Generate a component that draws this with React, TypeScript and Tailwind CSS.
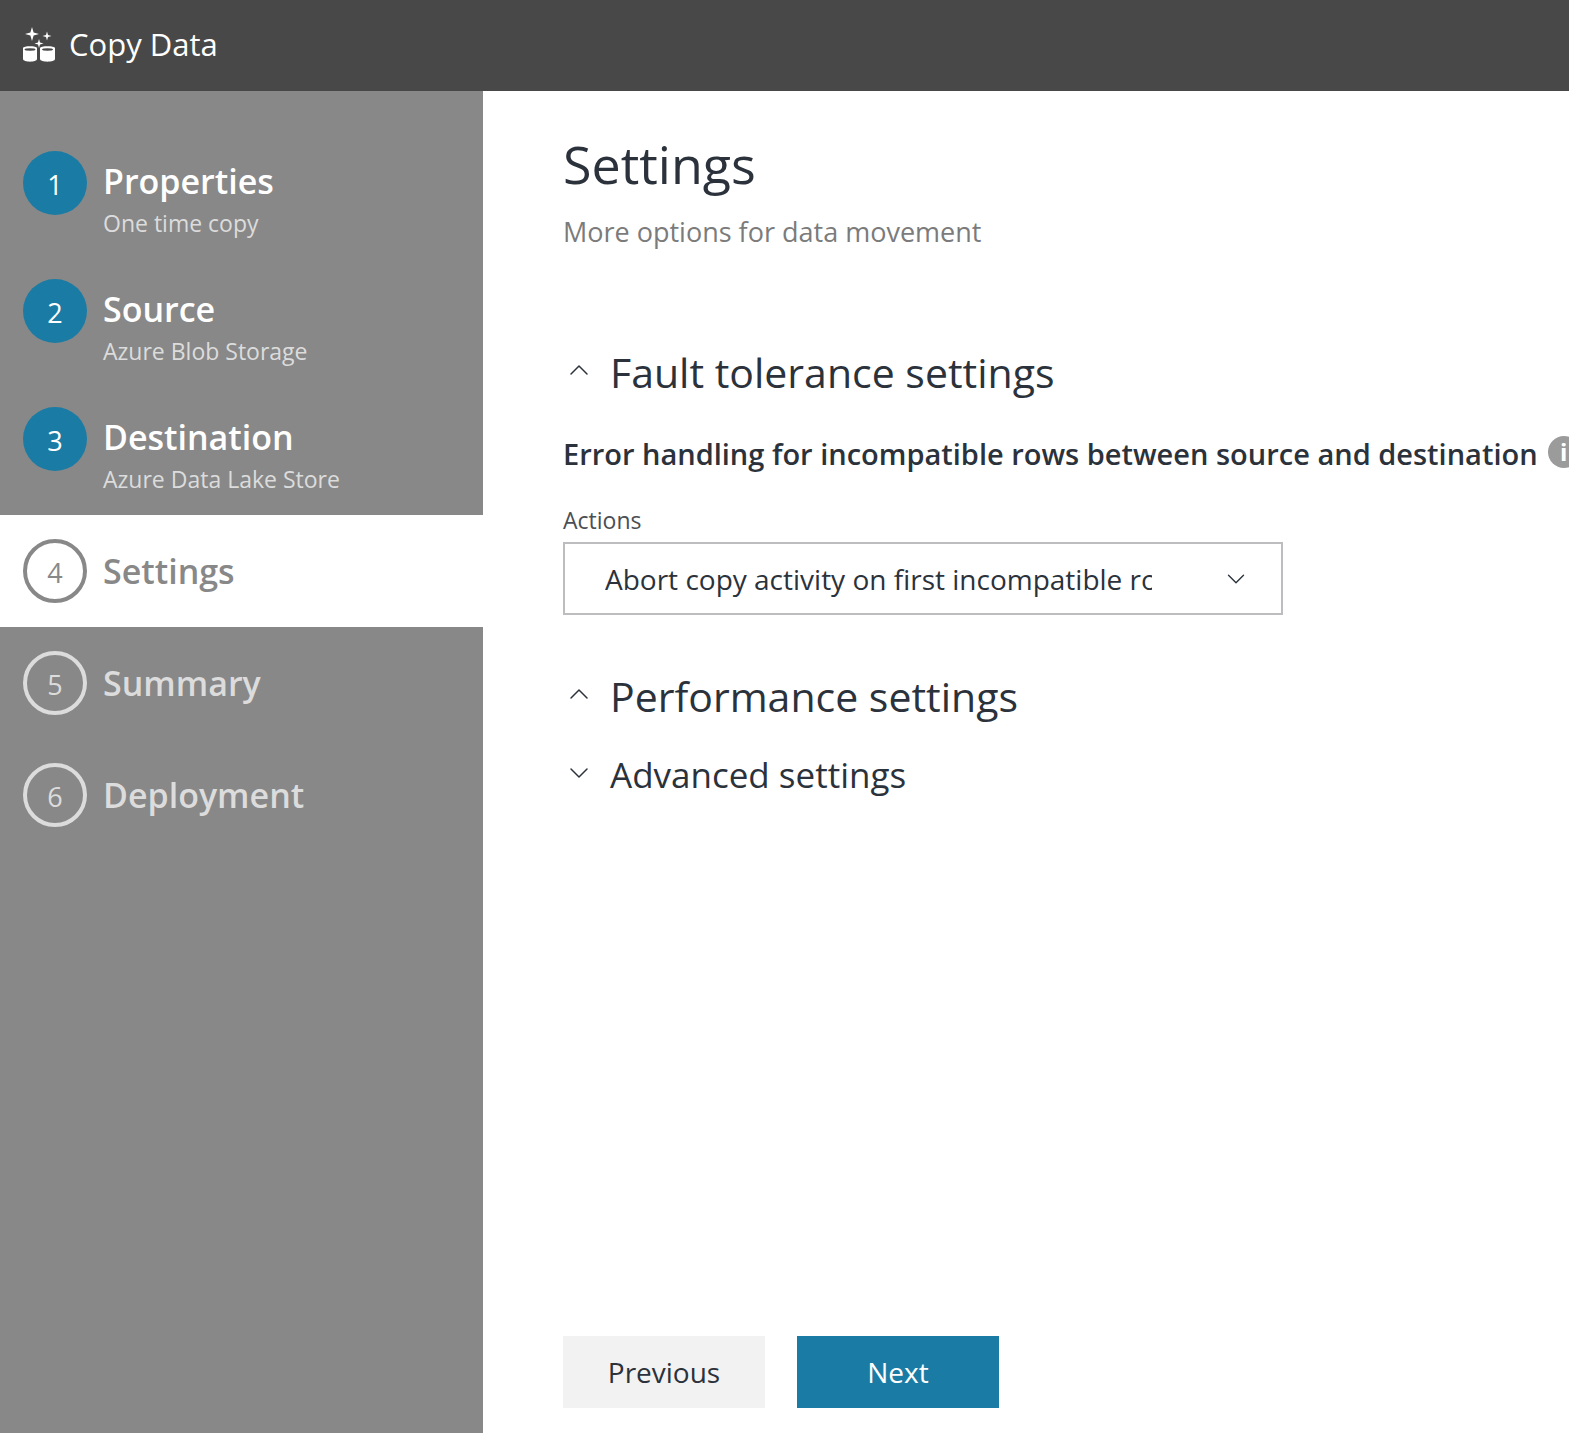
import { ChevronDown, ChevronUp } from "lucide-react";

const done = [
  { n: 1, title: "Properties", sub: "One time copy" },
  { n: 2, title: "Source", sub: "Azure Blob Storage" },
  { n: 3, title: "Destination", sub: "Azure Data Lake Store" },
];

function Logo() {
  return (
    <svg width="34" height="36" viewBox="0 0 34 36" className="shrink-0">
      <g fill="#fff">
        <path d="M10 0 L11.6 5.4 L17 7 L11.6 8.6 L10 14 L8.4 8.6 L3 7 L8.4 5.4 Z" />
        <path d="M25 4.5 L26 8 L29.5 9 L26 10 L25 13.5 L24 10 L20.5 9 L24 8 Z" />
        <path d="M17 12 L18 15.5 L21.5 16.5 L18 17.5 L17 21 L16 17.5 L12.5 16.5 L16 15.5 Z" />
        <path d="M1 21 C1 18.5 15 18.5 15 21 V32 C15 35.5 1 35.5 1 32 Z" />
        <path d="M18 21 C18 18.5 33 18.5 33 21 V32 C33 35.5 18 35.5 18 32 Z" />
      </g>
      <ellipse cx="8" cy="22.5" rx="5.5" ry="1.2" fill="#484848" />
      <ellipse cx="25.5" cy="22.5" rx="5.5" ry="1.2" fill="#484848" />
    </svg>
  );
}

function Section({ title, open, size }: { title: string; open: boolean; size: string }) {
  const Icon = open ? ChevronUp : ChevronDown;
  return (
    <div className="flex items-center gap-[15px]">
      <Icon size={32} strokeWidth={1.1} className="text-[#2b323b] -mt-1" />
      <h2 className={`${size} text-[#2b323b]`}>{title}</h2>
    </div>
  );
}

export default function App() {
  return (
    <div className="flex flex-col h-[1433px] overflow-hidden bg-white font-['Open_Sans','Noto_Sans',sans-serif]">
      <header className="h-[91px] shrink-0 bg-[#484848] flex items-center gap-[13px] pl-[22px] pb-[2px]">
        <Logo />
        <span className="text-[31px] text-white">Copy Data</span>
      </header>
      <div className="flex flex-1">
        <aside className="w-[483px] shrink-0 bg-[#888888] pt-10">
          {done.map((s) => (
            <div key={s.n} className="h-32 flex pl-[23px] pt-5 gap-4">
              <div className="w-16 h-16 rounded-full bg-[#1a7ca4] text-white text-[27px] flex items-center justify-center shrink-0 pt-1">
                {s.n}
              </div>
              <div>
                <div className="text-[34px] font-semibold text-white leading-[44px] mt-2">{s.title}</div>
                <div className="text-[23px] text-[#dcdcdc] leading-8 mt-1">{s.sub}</div>
              </div>
            </div>
          ))}
          <div className="h-28 bg-white flex items-center pl-[23px] gap-4">
            <div className="w-16 h-16 rounded-full border-4 border-[#888888] text-[#888888] text-[27px] flex items-center justify-center shrink-0 pt-1">
              4
            </div>
            <div className="text-[34px] font-semibold text-[#888888]">Settings</div>
          </div>
          {[
            { n: 5, title: "Summary" },
            { n: 6, title: "Deployment" },
          ].map((s) => (
            <div key={s.n} className="h-28 flex items-center pl-[23px] gap-4">
              <div className="w-16 h-16 rounded-full border-4 border-[#dcdcdc] text-[#dcdcdc] text-[27px] flex items-center justify-center shrink-0 pt-1">
                {s.n}
              </div>
              <div className="text-[34px] font-semibold text-[#dcdcdc]">{s.title}</div>
            </div>
          ))}
        </aside>
        <main className="flex-1 pl-20 flex flex-col min-w-0">
          <h1 className="text-[52px] text-[#2b323b] leading-[70px] mt-[38px]">Settings</h1>
          <p className="text-[27px] text-[#7b7b7b] leading-9 mt-[15px]">More options for data movement</p>
          <div className="mt-[94px]">
            <Section title="Fault tolerance settings" open size="text-[41px] leading-[56px]" />
          </div>
          <div className="flex items-center gap-[10px] mt-[34px]">
            <span className="text-[29px] font-semibold text-[#2b323b] leading-10 whitespace-nowrap">
              Error handling for incompatible rows between source and destination
            </span>
            <span className="w-8 h-8 rounded-full bg-[#9b9b9b] text-white text-[24px] font-bold flex items-center justify-center shrink-0 -mt-1">
              i
            </span>
          </div>
          <label className="text-[23px] text-[#4a4f55] leading-8 mt-[30px]">Actions</label>
          <div className="w-[720px] h-[73px] border-2 border-[#bdbdc0] flex items-center pl-10 pr-[30px] mt-[6px]">
            <span className="w-[547px] overflow-hidden whitespace-nowrap text-[28px] text-[#2b323b]">
              Abort copy activity on first incompatible row (copy)
            </span>
            <ChevronDown size={30} strokeWidth={1.1} className="text-[#2b323b] ml-auto" />
          </div>
          <div className="mt-[53px]">
            <Section title="Performance settings" open size="text-[41px] leading-[56px]" />
          </div>
          <div className="mt-[26px]">
            <Section title="Advanced settings" open={false} size="text-[35px] leading-[50px]" />
          </div>
          <div className="flex gap-8 mt-auto mb-[25px]">
            <button className="w-[202px] h-[72px] bg-[#f2f2f2] text-[28px] text-[#2b323b]">Previous</button>
            <button className="w-[202px] h-[72px] bg-[#1a7ca4] text-[28px] text-white">Next</button>
          </div>
        </main>
      </div>
    </div>
  );
}
